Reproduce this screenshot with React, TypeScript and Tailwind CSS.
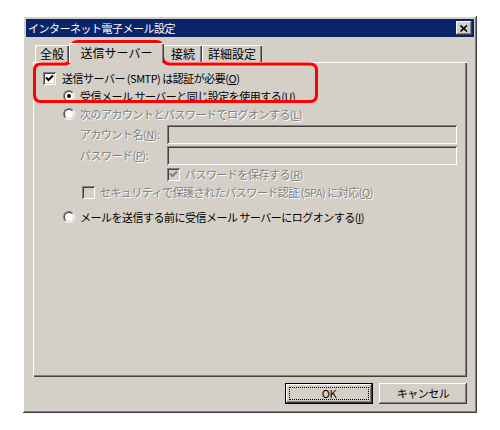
import type { ReactNode } from "react";

const raised =
  "shadow-[inset_-1px_-1px_#404040,inset_1px_1px_#ffffff,inset_-2px_-2px_#808080,inset_2px_2px_#d4d0c8]";
const sunken =
  "shadow-[inset_1px_1px_#808080,inset_-1px_-1px_#ffffff,inset_2px_2px_#404040,inset_-2px_-2px_#d4d0c8]";
const dim = "text-[#808080] [text-shadow:1px_1px_0_#ffffff]";
const tabEdge = "shadow-[inset_1px_1px_#ffffff,inset_-1px_0_#404040,inset_-2px_0_#808080]";

function CheckBox({ checked, disabled }: { checked?: boolean; disabled?: boolean }) {
  return (
    <div className={`w-[13px] h-[13px] shrink-0 ${sunken} ${disabled ? "bg-[#d4d0c8]" : "bg-white"} flex items-center justify-center`}>
      {checked && (
        <svg width="9" height="9" viewBox="0 0 9 9">
          <path d="M1 3.5 L3.5 6 L8 1.5" fill="none" stroke={disabled ? "#808080" : "#000"} strokeWidth="2" />
        </svg>
      )}
    </div>
  );
}

function Radio({ checked }: { checked?: boolean }) {
  return (
    <div className="w-[12px] h-[12px] shrink-0 rounded-full border border-t-[#808080] border-l-[#808080] border-b-white border-r-white">
      <div className="w-full h-full rounded-full border border-t-[#404040] border-l-[#404040] border-b-[#d4d0c8] border-r-[#d4d0c8] bg-white flex items-center justify-center">
        {checked && <div className="w-[4px] h-[4px] rounded-full bg-black" />}
      </div>
    </div>
  );
}

function Key({ k }: { k: string }) {
  return (
    <>
      (<u>{k}</u>)
    </>
  );
}

function Row({ className, children }: { className: string; children: ReactNode }) {
  return <div className={`flex items-center h-[16px] ${className}`}>{children}</div>;
}

export default function App() {
  return (
    <div
      className="relative w-[500px] h-[430px] bg-white pt-[16px] pl-[23px] text-[11px] tracking-[-0.5px] text-black leading-none"
      style={{ fontFamily: '"Noto Sans CJK JP", "Liberation Sans", sans-serif' }}
    >
      <div className={`w-[454px] h-[397px] p-[3px] bg-[#d4d0c8] flex flex-col ${raised}`}>
        {/* タイトルバー */}
        <div className="h-[18px] bg-[#0a246a] flex items-center pl-[2px] pr-[2px]">
          <span className="text-white">インターネット電子メール設定</span>
          <div className={`ml-auto w-[16px] h-[14px] bg-[#d4d0c8] ${raised} flex items-center justify-center`}>
            <svg width="8" height="7" viewBox="0 0 8 7">
              <path d="M0.5 0.5 L7 6.5 M7 0.5 L0.5 6.5" stroke="#000" strokeWidth="1.6" />
            </svg>
          </div>
        </div>

        <div className="flex-1 px-[7px] flex flex-col">
          {/* タブ */}
          <div className="mt-[6px] h-[19px] flex items-end pl-[2px] text-[12px] tracking-normal">
            <div className={`w-[34px] h-[17px] rounded-tl-[2px] ${tabEdge} flex items-center justify-center`}>
              全般
            </div>
            <div className={`relative z-10 -mb-[1px] w-[95px] h-[20px] bg-[#d4d0c8] rounded-tl-[2px] ${tabEdge} flex items-center justify-center`}>
              送信サーバー
            </div>
            <div className="w-[38px] h-[17px] shadow-[inset_0_1px_#ffffff,inset_-1px_0_#404040,inset_-2px_0_#808080] flex items-center justify-center">
              接続
            </div>
            <div className={`w-[60px] h-[17px] ${tabEdge} flex items-center justify-center`}>
              詳細設定
            </div>
          </div>

          {/* タブページ */}
          <div className="h-[315px] shadow-[inset_1px_1px_#ffffff,inset_-1px_-1px_#404040,inset_-2px_-2px_#808080] pt-[8px] pl-[10px] pr-[10px] flex flex-col">
            <Row className="">
              <CheckBox checked />
              <span className="ml-[6px]">
                送信サーバー&nbsp;(SMTP)&nbsp;は認証が必要<Key k="O" />
              </span>
            </Row>
            <Row className="mt-[2px] pl-[20px]">
              <Radio checked />
              <span className="ml-[5px]">
                受信メール サーバーと同じ設定を使用する<Key k="U" />
              </span>
            </Row>
            <Row className={`mt-[2px] pl-[20px] ${dim}`}>
              <Radio />
              <span className="ml-[5px]">
                次のアカウントとパスワードでログオンする<Key k="L" />
              </span>
            </Row>
            <div className="mt-[3px] h-[19px] flex items-center pl-[37px]">
              <span className={`w-[87px] ${dim}`}>
                アカウント名<Key k="N" />:
              </span>
              <div className={`flex-1 h-full ${sunken}`} />
            </div>
            <div className="mt-[2px] h-[19px] flex items-center pl-[37px]">
              <span className={`w-[87px] ${dim}`}>
                パスワード<Key k="P" />:
              </span>
              <div className={`flex-1 h-full ${sunken}`} />
            </div>
            <Row className={`mt-[1px] pl-[124px] ${dim}`}>
              <CheckBox checked disabled />
              <span className="ml-[5px]">
                パスワードを保存する<Key k="R" />
              </span>
            </Row>
            <Row className={`mt-[2px] pl-[39px] ${dim}`}>
              <CheckBox disabled />
              <span className="ml-[5px]">
                セキュリティで保護されたパスワード認証 (SPA) に対応<Key k="Q" />
              </span>
            </Row>
            <Row className="mt-[9px] pl-[20px]">
              <Radio />
              <span className="ml-[5px]">
                メールを送信する前に受信メール サーバーにログオンする<Key k="I" />
              </span>
            </Row>
          </div>

          {/* ボタン */}
          <div className="mt-[6px] flex justify-end gap-[6px]">
            <button className="w-[88px] h-[21px] border border-black bg-[#d4d0c8] p-0">
              <div className={`w-full h-full ${raised} p-[3px]`}>
                <div className="w-full h-full border border-dotted border-black flex items-center justify-center">
                  OK
                </div>
              </div>
            </button>
            <button className={`w-[88px] h-[21px] bg-[#d4d0c8] ${raised} flex items-center justify-center`}>
              キャンセル
            </button>
          </div>
        </div>
      </div>

      {/* 赤枠の注釈 */}
      <svg className="absolute left-0 top-0 pointer-events-none" width="500" height="430" viewBox="0 0 500 430">
        <path
          d="M34.5 70 Q34.5 64 41 64 L64 64 Q71.5 64 71.5 56 L71.5 48 Q71.5 41.5 78 41.5 L156 41.5 Q162.5 41.5 162.5 48 L162.5 56 Q162.5 64 170 64 L310 64 Q316.5 64 316.5 70 L316.5 95 Q316.5 101.5 310 101.5 L41 101.5 Q34.5 101.5 34.5 95 Z"
          fill="none"
          stroke="#ff0000"
          strokeWidth="3"
        />
      </svg>
    </div>
  );
}
